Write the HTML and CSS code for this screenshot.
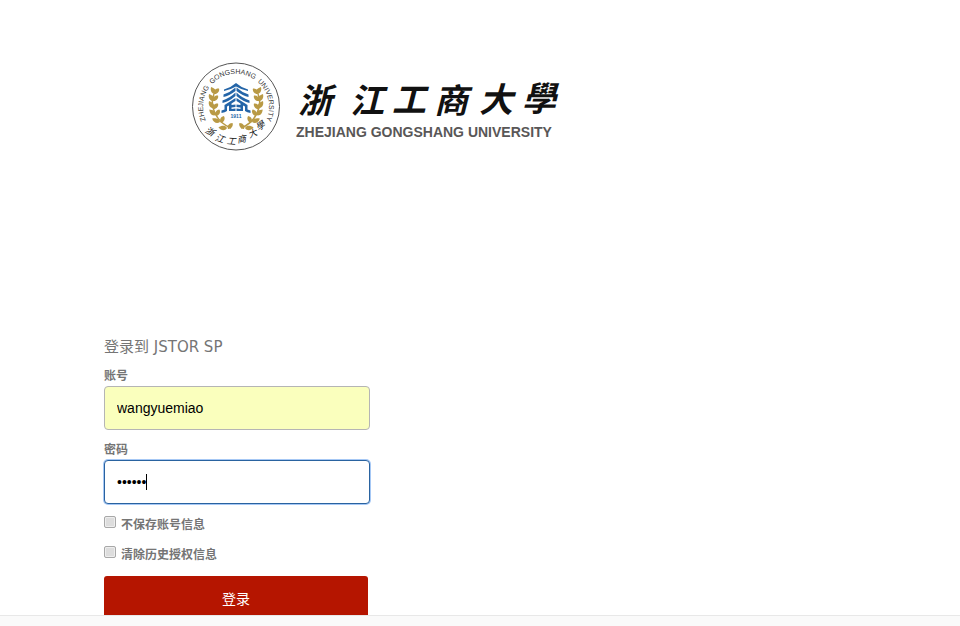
FILE: index.html
```html
<!DOCTYPE html>
<html lang="zh-CN">
<head>
    <meta charset="UTF-8">
    <meta name="viewport" content="width=device-width, initial-scale=1.0">
    <title>浙江工商大学 - 登录</title>
    <link rel="stylesheet" href="styles.css">
</head>
<body>
    <main class="wrapper">
        <header class="header">
            <svg class="logo" width="374" height="92" viewBox="190 60 374 92" role="img" aria-label="浙江工商大學">
                <defs>
                    <path id="sealArc" d="M207.500 123.500 A33 33 0 1 1 264.500 123.500"/>
                    <path id="leaf" d="M0 0 C-4 0.500 -6 -3 -5 -7 C-2 -6 1.500 -3.500 0 0 Z"/>
                    <path id="innerLeaf" d="M0 0 C-1 -3 1.500 -6 5 -5.500 C6 -2.500 3 0.500 0 0 Z"/>
                    <g id="branch" fill="#b99a45">
                        <path d="M214 94 C209 106 216 122 231 128" fill="none" stroke="#b99a45" stroke-width="1.500"/>
                        <use href="#leaf" x="216" y="94"/>
                        <use href="#leaf" x="214" y="101"/>
                        <use href="#leaf" x="214" y="108"/>
                        <use href="#leaf" transform="translate(216 115) rotate(-15)"/>
                        <use href="#leaf" transform="translate(220 122) rotate(-30)"/>
                        <use href="#leaf" transform="translate(227 128) rotate(-50)"/>
                        <use href="#innerLeaf" x="214" y="94"/>
                        <use href="#innerLeaf" x="213" y="101"/>
                        <use href="#innerLeaf" x="213" y="109"/>
                        <use href="#innerLeaf" transform="translate(216 116) rotate(-15)"/>
                        <use href="#innerLeaf" transform="translate(221 123) rotate(-20)"/>
                        <use href="#innerLeaf" transform="translate(228 129) rotate(-5)"/>
                    </g>
                    <g id="tower" fill="#2465a8">
                        <path d="M236 83 L236 86.500 Q230 90 224 91 L224 89.500 Q231 87.500 236 83 Z"/>
                        <path d="M235.500 87.500 L235.500 91 Q229 96 223.500 97 L223.500 94.500 Q230 92.500 235.500 87.500 Z"/>
                        <path d="M235.500 92.500 L235.500 96 Q229 101.500 222.500 103 L222.500 100.500 Q230 98 235.500 92.500 Z"/>
                        <path d="M235.500 98 L235.500 101 L231.500 103.500 L231.500 105 L235.500 104.500 L235.500 107 L231.500 107.500 L231.500 109 L235.500 108.500 L235.500 111 L229 111 L229 105.500 L227 106.500 L227 111 Q225 112.500 221.500 113 L221.500 110.500 L224.500 109.500 L224.500 105 Z"/>
                    </g>
                </defs>

                <!-- 校徽 -->
                <circle cx="236" cy="106.500" r="43.500" fill="#ffffff" stroke="#555555" stroke-width="1"/>
                <text class="seal-en"><textPath href="#sealArc" startOffset="50%">ZHEJIANG&#160; GONGSHANG&#160; UNIVERSITY</textPath></text>
                <use href="#branch"/>
                <use href="#branch" transform="translate(472 0) scale(-1 1)"/>
                <use href="#tower"/>
                <use href="#tower" transform="translate(472 0) scale(-1 1)"/>
                <text class="seal-year" x="236" y="118">1911</text>
                <text class="seal-zh" x="209 219 231 242 254 263" y="132 140 144 143 138 131" rotate="30 20 5 -8 -22 -35">浙江工商大學</text>

                <!-- 校名 -->
                <text class="name-zh" x="315 367 409 451 496 539" y="113 113 112 113 112 111">浙江工商大學</text>
                <text class="name-en" x="296" y="137">ZHEJIANG GONGSHANG UNIVERSITY</text>
            </svg>
        </header>

        <form class="login">
            <h1 class="title">登录到 JSTOR SP</h1>

            <label class="label" for="username">账号</label>
            <input class="field autofilled" type="text" id="username" value="wangyuemiao">

            <label class="label" for="password">密码</label>
            <div class="password">
                <input class="field active" type="password" id="password" value="wangym">
                <span class="caret"></span>
            </div>

            <div class="option">
                <input type="checkbox" id="donotcache">
                <label for="donotcache">不保存账号信息</label>
            </div>
            <div class="option">
                <input type="checkbox" id="revoke">
                <label for="revoke">清除历史授权信息</label>
            </div>

            <button class="submit" type="submit">登录</button>
        </form>
    </main>
    <footer class="footer"></footer>
</body>
</html>
```

FILE: styles.css
```css
* {
    box-sizing: border-box;
}

body {
    margin: 0;
    height: 100vh;
    display: flex;
    flex-direction: column;
    background-color: #ffffff;
    color: #757575;
    font-family: "Liberation Sans", "Noto Sans CJK SC", sans-serif;
    font-size: 12px;
}

.wrapper {
    flex: 1;
    min-height: 0;
    overflow: hidden;
    padding: 60px 104px 0;
}

/* 校徽和校名 */
.header {
    height: 277px;
    padding-left: 86px;
}

.logo {
    display: block;
    overflow: visible;
}

.seal-en {
    font-size: 7px;
    fill: #333333;
    text-anchor: middle;
}

.seal-year {
    font-size: 5px;
    font-weight: bold;
    fill: #2465a8;
    text-anchor: middle;
}

.seal-zh {
    font-family: "Noto Sans CJK TC", sans-serif;
    font-size: 9px;
    font-style: italic;
    fill: #111111;
    text-anchor: middle;
}

.name-zh {
    font-family: "Noto Sans CJK TC", sans-serif;
    font-size: 34px;
    font-style: italic;
    font-weight: bold;
    fill: #111111;
    text-anchor: middle;
}

.name-en {
    font-size: 14px;
    font-weight: bold;
    fill: #595757;
}

/* 登录表单 */
.login {
    width: 266px;
}

.title {
    margin: 0 0 10px;
    font-family: "DejaVu Sans", "Noto Sans CJK SC", sans-serif;
    font-size: 15px;
    font-weight: normal;
    line-height: 20px;
}

.label {
    display: block;
    font-weight: bold;
    line-height: 19px;
}

.field {
    display: block;
    width: 100%;
    height: 44px;
    margin-bottom: 11px;
    padding: 0 12px;
    border: 1px solid #b5b5b5;
    border-radius: 4px;
    outline: none;
    background-color: #ffffff;
    color: #000000;
    font-family: "Liberation Sans", sans-serif;
    font-size: 14px;
}

.autofilled {
    background-color: #faffbd;
}

.active {
    border-color: #2a63a0;
    box-shadow: 0 0 0 1px #a6c8f5;
}

.password {
    position: relative;
}

.caret {
    position: absolute;
    top: 14px;
    left: 42px;
    width: 1px;
    height: 16px;
    background-color: #000000;
}

.option {
    display: flex;
    gap: 5px;
    height: 20px;
    margin-bottom: 10px;
    font-weight: bold;
    line-height: 20px;
}

.option input {
    appearance: none;
    width: 12px;
    height: 12px;
    margin: 1px 0;
    border: 1px solid #a8a8a8;
    border-radius: 2px;
    background-color: #dddddd;
    box-shadow: inset 0 0 0 1px #eeeeee;
}

.submit {
    display: block;
    width: 264px;
    height: 44px;
    margin-top: 11px;
    border: none;
    border-radius: 3px;
    background-color: #b51500;
    color: #ffffff;
    font-family: "Liberation Sans", "Noto Sans CJK SC", sans-serif;
    font-size: 14px;
    cursor: pointer;
}

.footer {
    height: 11px;
    border-top: 1px solid #e8e8e8;
    background-color: #fafafa;
}
```
